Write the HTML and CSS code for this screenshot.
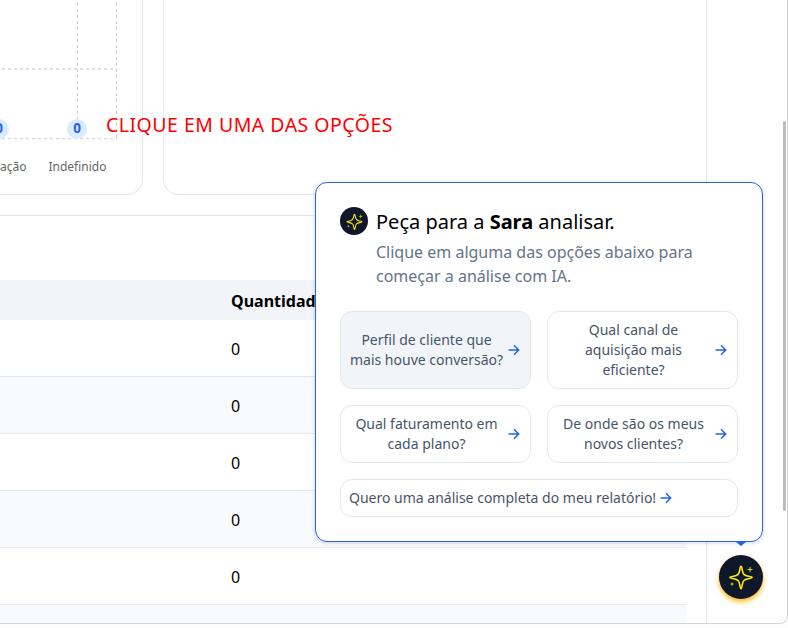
FILE: index.html
```
<!DOCTYPE html>
<html lang="pt-BR">
<head>
<meta charset="utf-8">
<title>Relatório</title>
<link rel="stylesheet" href="styles.css">
</head>
<body>
<svg class="defs" width="0" height="0" aria-hidden="true">
  <symbol id="arrow" viewBox="0 0 16 16"><path d="M2.5 8h10.2M8 3.2L12.7 8L8 12.8"/></symbol>
  <symbol id="sparkle" viewBox="0 0 28 28"><path class="star" d="M14 3.2C14.7 3.2 14.8 4.4 15.2 6.8C15.9 11.2 17 12.5 21.4 13.3C23.8 13.7 25.1 13.9 25.1 14.5C25.1 15.1 23.8 15.3 21.4 15.7C17 16.5 15.9 17.6 15.2 22.1C14.8 24.4 14.7 25.6 14 25.6C13.3 25.6 13.2 24.4 12.8 22.1C12.1 17.6 11 16.5 6.6 15.7C4.2 15.3 2.9 15.1 2.9 14.5C2.9 13.9 4.2 13.7 6.6 13.3C11 12.5 12.1 11.2 12.8 6.8C13.2 4.4 13.3 3.2 14 3.2Z"/><path class="plus" d="M23 4v5M20.5 6.5h5M5 19.5v3M3.5 21h3"/></symbol>
</svg>
<main class="window">
  <div class="report">
    <div class="cards">
      <section class="card chart">
        <svg class="grid" width="142" height="144" viewBox="0 0 142 144">
          <path class="guide" d="M77.5 3v136M116.5 3v136"/>
          <path class="guide row" d="M-4 69h121M-4 138.7h121"/>
          <circle cx="-1" cy="129" r="10"/><circle cx="77" cy="129" r="10"/>
          <text x="-1" y="133">0</text><text x="77" y="133">0</text>
        </svg>
        <div class="labels"><span>ação</span><span>Indefinido</span></div>
      </section>
      <section class="card empty"></section>
    </div>
    <section class="table-panel">
      <table>
        <thead><tr><th></th><th>Quantidade</th></tr></thead>
        <tbody>
          <tr><td></td><td>0</td></tr>
          <tr><td></td><td>0</td></tr>
          <tr><td></td><td>0</td></tr>
          <tr><td></td><td>0</td></tr>
          <tr><td></td><td>0</td></tr>
          <tr><td></td><td></td></tr>
        </tbody>
      </table>
    </section>
  </div>
  <div class="scrollbar"></div>
</main>
<p class="note">CLIQUE EM UMA DAS OPÇÕES</p>
<aside class="popup">
  <header>
    <span class="avatar"><svg width="19" height="19"><use href="#sparkle"/></svg></span>
    <div>
      <h2>Peça para a <b>Sara</b> analisar.</h2>
      <p>Clique em alguma das opções abaixo para começar a análise com IA.</p>
    </div>
  </header>
  <div class="options">
    <button class="active"><span>Perfil de cliente que mais houve conversão?</span><svg class="arrow"><use href="#arrow"/></svg></button>
    <button><span>Qual canal de aquisição mais eficiente?</span><svg class="arrow"><use href="#arrow"/></svg></button>
    <button><span>Qual faturamento em cada plano?</span><svg class="arrow"><use href="#arrow"/></svg></button>
    <button><span>De onde são os meus novos clientes?</span><svg class="arrow"><use href="#arrow"/></svg></button>
    <button class="full"><span>Quero uma análise completa do meu relatório!</span><svg class="arrow"><use href="#arrow"/></svg></button>
  </div>
</aside>
<div class="launcher"><svg width="28" height="28"><use href="#sparkle"/></svg></div>
</body>
</html>
```
FILE: styles.css
```
* { box-sizing: border-box; }
body { margin: 0; width: 788px; height: 628px; overflow: hidden; position: relative; background: #fcfcfc; font-family: "Noto Sans", sans-serif; color: #000; }
h2, p { margin: 0; }
.defs { position: absolute; }
.window { display: flex; justify-content: space-between; width: 788px; height: 624px; overflow: hidden; background: #fff; border: solid #d4d4d4; border-width: 0 1px 1px 0; border-radius: 0 0 8px 0; }
.report { width: 707px; }
.cards { display: flex; gap: 20px; height: 195px; }
.card { border: 1px solid #e2e8f0; border-top: 0; }
.chart { width: 143px; border-left: 0; border-radius: 0 0 16px 0; }
.empty { flex: 1; border-radius: 0 0 16px 16px; }
.grid { display: block; overflow: hidden; }
.guide { stroke: #ccc; stroke-width: 1; stroke-dasharray: 3 3; fill: none; }
.guide.row { stroke: #d8d8d8; stroke-width: 1.3; }
.grid circle { fill: #dbeafe; }
.grid text { fill: #2563eb; font-size: 13.5px; font-weight: 700; text-anchor: middle; }
.labels { display: flex; gap: 22px; margin-top: 14px; font-size: 12px; line-height: 17px; color: #666; }
.table-panel { height: 440px; margin-top: 20px; padding: 64px 20px 0 0; border: solid #e2e8f0; border-width: 1px 1px 0 0; }
table { width: 686px; border-collapse: separate; border-spacing: 0; table-layout: fixed; font-size: 16px; line-height: 24px; }
th, td { padding: 0; text-align: left; }
th:first-child, td:first-child { width: 231px; }
th { height: 40px; padding-top: 2px; background: #f1f5f9; font-weight: 700; }
td { height: 57px; padding-top: 2px; border-bottom: 1px solid #e2e8f0; }
tbody tr:nth-child(even) { background: #f9fafc; }
.scrollbar { width: 3px; height: 390px; margin: 121px 1px 0 0; border-radius: 2px; background: #bdbdbd; }
.note { position: absolute; left: 106px; top: 111px; white-space: nowrap; font-size: 19.5px; letter-spacing: .48px; line-height: 28px; color: #f00; }
.popup { position: absolute; left: 315px; top: 182px; width: 448px; height: 360px; padding: 24px; border: 1px solid #2563eb; border-radius: 12px; background: #fff; box-shadow: 0 1px 4px rgb(15 23 42 / .18); }
.popup::after { content: ""; position: absolute; right: 16px; bottom: -5px; border: solid transparent; border-width: 4px 5px 0; border-top-color: #2563eb; }
.popup header { display: flex; gap: 8px; }
.popup header > div { flex: 1; }
.avatar { display: flex; align-items: center; justify-content: center; width: 28px; height: 28px; border-radius: 50%; background: #0f172a; }
h2 { font-size: 20px; line-height: 28px; font-weight: 400; padding-top: 1px; }
.popup header p { width: 340px; margin-top: 4px; font-size: 16px; line-height: 24px; color: #64748b; }
.options { display: grid; grid-template-columns: 1fr 1fr; gap: 16px; margin-top: 23px; }
button { display: flex; align-items: center; min-width: 0; gap: 2px; padding: 8px; border: 1px solid #e2e8f0; border-radius: 12px; background: #fff; font: 14px/20px "Noto Sans", sans-serif; color: #475569; text-align: center; }
button span { flex: 1; }
button .arrow { flex: none; width: 16px; height: 16px; fill: none; stroke: #2563eb; stroke-width: 1.5; }
.active { background: #f1f5f9; }
.full { grid-column: 1 / -1; }
.full span { flex: none; }
.launcher { position: absolute; left: 719px; top: 555px; display: flex; align-items: center; justify-content: center; width: 44px; height: 44px; border-radius: 50%; background: #0f172a; box-shadow: 0 3px 5px rgb(251 191 36 / .85), 0 2px 3px rgb(245 158 11 / .4); }
.star { fill: none; stroke: #fde910; stroke-width: 1.6; }
.plus { fill: none; stroke: #fde910; stroke-width: .9; }
```
